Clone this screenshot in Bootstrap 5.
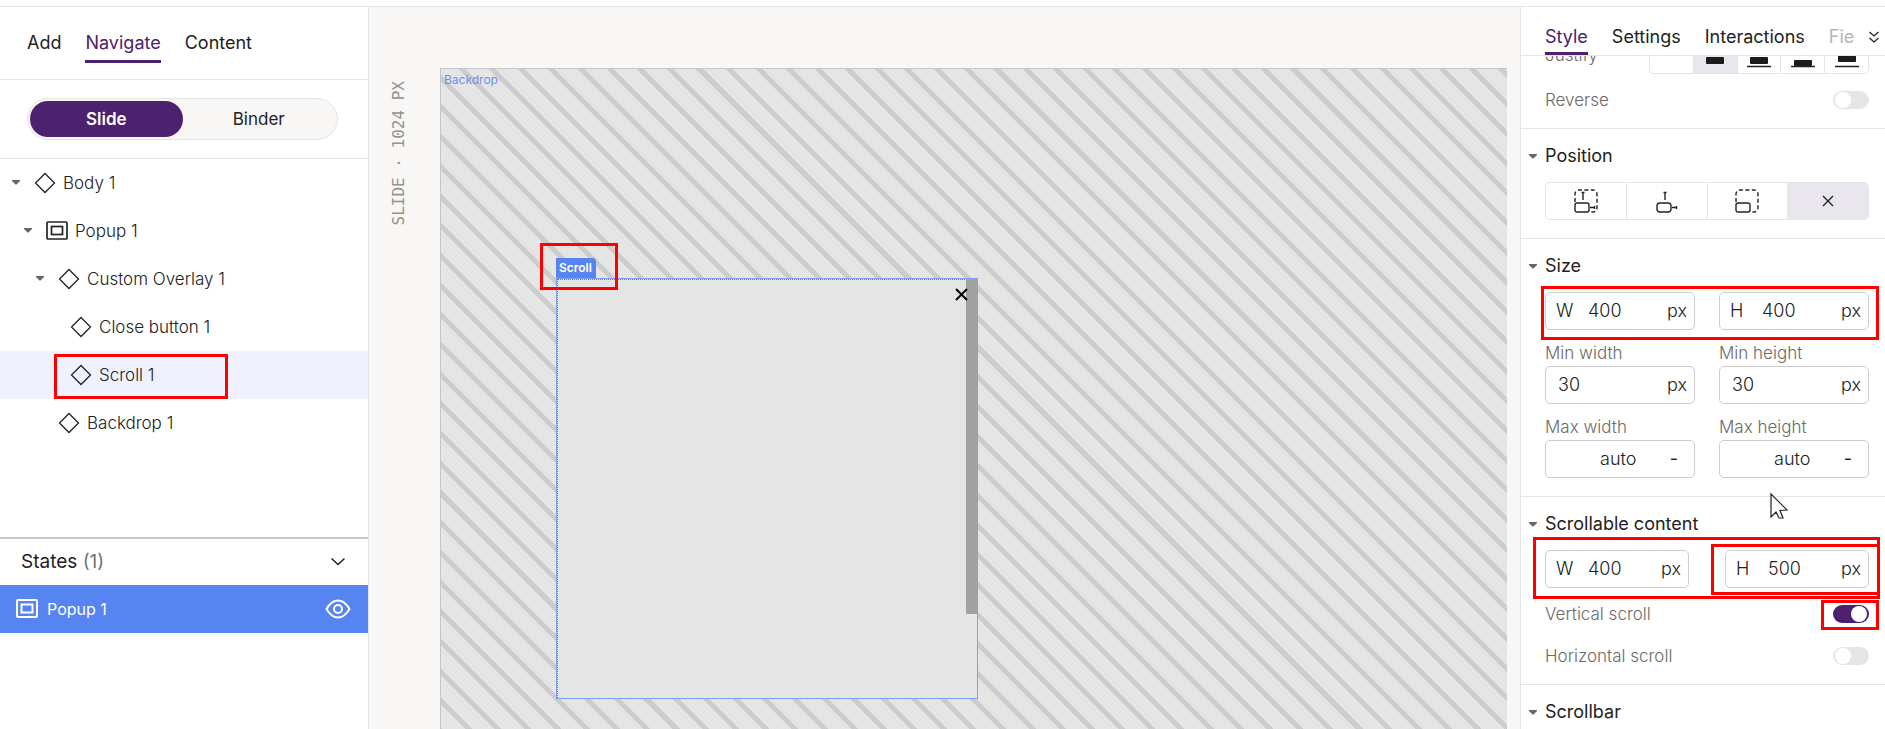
<!DOCTYPE html>
<html lang="en">
<head>
<meta charset="utf-8">
<meta name="viewport" content="width=device-width, initial-scale=1">
<title>Slide editor</title>
<link href="https://cdn.jsdelivr.net/npm/bootstrap@5.3.0/dist/css/bootstrap.min.css" rel="stylesheet">
<script src="https://cdn.jsdelivr.net/npm/bootstrap@5.3.0/dist/js/bootstrap.bundle.min.js"></script>
<style>
  :root { --line: #e5e4e4; --purple: #4c216d; --blue: #5684f0; --ink: #222; --soft: #6c6967; }
  body { font-family: Inter, "Open Sans", sans-serif; font-size: 16px; line-height: 24px; color: var(--ink); background: #fff; }
  svg { display: block; flex: none; fill: none; stroke: currentColor; }
  button { color: inherit; }
  .editor { height: 100vh; padding-top: 6px; overflow: hidden; }
  .editor > * { border-top: 1px solid var(--line); }

  .left-panel { width: 369px; border-right: 1px solid var(--line); }
  .tab-bar { border-bottom: 1px solid var(--line); }
  .left-panel .tab-bar { height: 73px; padding: 0 27px; gap: 24px; }
  .tab-link { color: var(--ink); text-decoration: none; font-size: 18px; line-height: 24px; border-bottom: 3px solid transparent; }
  .tab-link.active { color: var(--purple); border-color: var(--purple); }
  .left-panel .tab-link { padding: 5px 0; margin-top: 3px; }
  .view-switch { padding: 18px 30px 18px 27px; border-bottom: 1px solid var(--line); }
  .view-switch > div { height: 42px; padding: 2px; border: 1px solid var(--line); border-radius: 21px; background: #f8f7f6; }
  .view-switch button { border: 0; background: none; border-radius: 19px; font-size: 17px; }
  .view-switch button.active { background: var(--purple); color: #fff; font-weight: 600; }
  .tree-row { height: 48px; font-size: 17px; font-weight: 300; position: relative; padding-bottom: 1px; }
  .tree-row.selected { background: #eff1fe; }
  .tree-row > button, .twisty-gap { width: 13px; margin-right: 12px; border: 0; padding: 0; background: none; color: #6a6563; display: block; }
  .tree-row > button svg { fill: currentColor; margin: 0 auto; }
  .tree-row > svg { margin-right: 7px; }
  .level-0 { padding-left: 9px; }
  .level-1 { padding-left: 21px; }
  .level-2 { padding-left: 33px; }
  .level-3 { padding-left: 45px; }
  .states { height: 192px; border-top: 2px solid #c9c8c8; }
  .states-head { height: 46px; padding: 0 22px 0 21px; font-size: 19px; }
  .state-row { height: 48px; padding: 0 17px 1px 16px; background: var(--blue); color: #fff; gap: 9px; }
  .state-row svg { stroke-width: 2; }
  .plain-btn { border: 0; background: none; padding: 0; }

  .stage { background: #f8f7f6; padding: 61px 13px 0 20px; gap: 31px; }
  .ruler-label { writing-mode: vertical-rl; transform: rotate(180deg); font: 16px/20px "DejaVu Sans Mono", monospace; color: #949290; align-self: flex-start; margin-top: 13px; }
  .slide { border: 1px solid #c6c6ca; border-width: 1px 0 0 1px; position: relative; overflow: hidden;
    background: repeating-linear-gradient(45deg, #ccc 0 1px, #e5e5e5 1px 17px, #ccc 17px 21px); }
  .slide small { font-size: 12px; line-height: 16px; }
  .slide-tag { color: #6a91ee; padding: 3px; }
  .overlay { position: absolute; left: 115px; top: 209px; width: 422px; height: 421px; background: #e5e5e5; border: 1px solid #7c9ff0; }
  .overlay::before { content: ""; position: absolute; inset: 0; border: 1px dotted #6b7896; border-width: 1px 0 0 1px; }
  .overlay-tag { position: absolute; left: -1px; bottom: 420px; height: 20px; padding: 2px 4px 0 3px; background: var(--blue); color: #fff; font-weight: 600; border-radius: 0 4px 0 0; }
  .overlay-thumb { position: absolute; right: 0; top: 0; width: 11px; height: 335px; background: #a2a2a2; }
  .overlay-close { position: absolute; right: 9px; top: 9px; color: #000; }

  .right-panel { width: 365px; border-left: 1px solid var(--line); }
  .right-panel .tab-bar { height: 49px; padding: 11px 5px 0 24px; gap: 24px; }
  .right-panel .tab-link { padding: 7px 0 3px; }
  .right-panel .tab-link.faded { color: #b5b3b2; }
  .clip-row { height: 18px; overflow: hidden; }
  .clip-row span { padding-bottom: 7px; }
  .field-name { color: var(--soft); font-size: 17px; font-weight: 300; }
  .toggle-row { padding-top: 14px; }
  .toggle-row + .toggle-row { padding-top: 18px; }
  .toggle-row:last-child { padding-bottom: 16px; }
  .group { padding: 0 16px 0 24px; border-bottom: 1px solid var(--line); }
  .group h2 { font-size: 18px; line-height: 24px; font-weight: 400; margin: 0 0 0 -16px; padding: 15px 0 14px; display: flex; align-items: center; gap: 8px; }
  .group h2 svg { fill: #6a6563; stroke: none; }
  .group-end { padding-bottom: 18px; }
  .choice { height: 38px; border: 1px solid #e4e3ea; border-radius: 5px; overflow: hidden; }
  .choice button { border: 0; background: none; padding: 0; display: flex; align-items: center; justify-content: center; flex: 1 1 0; }
  .choice button + button { border-left: 1px solid #e4e3ea; }
  .choice button.active { background: #e9e6ed; }
  .justify { width: 220px; }
  .field { height: 38px; border: 1px solid #ccc; border-radius: 5px; padding: 0 7px 0 9px; font-size: 18px; font-weight: 300; color: var(--ink); display: flex; align-items: center; flex: 1 1 0; min-width: 0; }
  .field input { border: 0; outline: 0; padding: 0; min-width: 0; flex: 1 1 0; width: 0; background: none; color: inherit; font-weight: 300; }
  .field label { width: 33px; padding-left: 1px; }
  .field .unit { width: 20px; text-align: right; }
  .field.bare { padding-left: 12px; }
  .field.auto { padding: 0 16px 0 54px; }
  .pair { gap: 24px; position: relative; }
  .pair.wide { gap: 36px; }
  .captions { padding-top: 11px; padding-bottom: 1px; }
  .captions label { flex: 1 1 0; }
  .switch { appearance: none; width: 36px; height: 18px; border-radius: 9px; background: #e6e5e3; margin: 0; position: relative; }
  .switch::before { content: ""; position: absolute; left: 2px; top: 1px; width: 16px; height: 16px; border-radius: 8px; background: #fff; }
  .switch:checked { background: var(--purple); }
  .switch:checked::before { left: 18px; }

  .callout-box { position: absolute; border: 3px solid #f00; pointer-events: none; }
  .on-tree { left: 54px; top: 3px; width: 174px; height: 45px; }
  .on-tag { left: 99px; top: 174px; width: 78px; height: 47px; }
  .on-size { inset: -6px -10px -10px -4px; }
  .on-content { inset: -13px -11px -11px -12px; }
  .on-height { inset: -7px -12px -8px -15px; }
  .on-switch { inset: -5px -10px -7px -12px; }
  .pointer { position: absolute; right: 96px; top: 485px; }
</style>
</head>
<body>
<svg width="0" height="0" class="position-absolute" aria-hidden="true">
  <symbol id="diamond" viewBox="0 0 22 22"><path d="M11 1.5 20.5 11 11 20.5 1.5 11Z"/></symbol>
  <symbol id="popup" viewBox="0 0 22 20"><rect x="1" y="1" width="20" height="17" rx="1"/><rect x="5.5" y="5.5" width="11" height="8"/></symbol>
  <symbol id="twisty" viewBox="0 0 8 5"><path d="M0 0h8v1L4.500 4.500h-1L0 1z" stroke="none"/></symbol>
</svg>

<div class="editor d-flex">
  <aside class="left-panel d-flex flex-column flex-shrink-0">
    <nav class="tab-bar d-flex align-items-center">
      <a class="tab-link" href="#">Add</a>
      <a class="tab-link active" href="#">Navigate</a>
      <a class="tab-link" href="#">Content</a>
    </nav>
    <div class="view-switch"><div class="d-flex">
      <button type="button" class="active flex-fill w-50">Slide</button>
      <button type="button" class="flex-fill w-50">Binder</button>
    </div></div>

    <div class="flex-grow-1">
      <div class="tree-row level-0 d-flex align-items-center"><button type="button" aria-label="Collapse"><svg width="8" height="5"><use href="#twisty"/></svg></button><svg width="22" height="22" stroke-width="1.300"><use href="#diamond"/></svg>Body 1</div>
      <div class="tree-row level-1 d-flex align-items-center"><button type="button" aria-label="Collapse"><svg width="8" height="5"><use href="#twisty"/></svg></button><svg width="22" height="20" stroke-width="1.700"><use href="#popup"/></svg>Popup 1</div>
      <div class="tree-row level-2 d-flex align-items-center"><button type="button" aria-label="Collapse"><svg width="8" height="5"><use href="#twisty"/></svg></button><svg width="22" height="22" stroke-width="1.300"><use href="#diamond"/></svg>Custom Overlay 1</div>
      <div class="tree-row level-3 d-flex align-items-center"><span class="twisty-gap"></span><svg width="22" height="22" stroke-width="1.300"><use href="#diamond"/></svg>Close button 1</div>
      <div class="tree-row level-3 selected d-flex align-items-center"><span class="twisty-gap"></span><svg width="22" height="22" stroke-width="1.300"><use href="#diamond"/></svg>Scroll 1<span class="callout-box on-tree"></span></div>
      <div class="tree-row level-2 d-flex align-items-center"><span class="twisty-gap"></span><svg width="22" height="22" stroke-width="1.300"><use href="#diamond"/></svg>Backdrop 1</div>
    </div>

    <section class="states">
      <div class="states-head d-flex align-items-center justify-content-between">
        <span>States <span class="text-secondary">(1)</span></span>
        <button type="button" class="plain-btn" aria-label="Collapse states"><svg width="16" height="10" stroke-width="1.500"><path d="m1.500 1.500 6.500 6 6.500-6"/></svg></button>
      </div>
      <div class="state-row d-flex align-items-center">
        <svg width="22" height="20"><use href="#popup"/></svg>
        <span class="flex-grow-1">Popup 1</span>
        <button type="button" class="plain-btn text-white" aria-label="Toggle visibility"><svg width="26" height="20" viewBox="0 0 26 20"><path d="M1.500 10C5 4 9 1.500 13 1.500S21 4 24.500 10C21 16 17 18.500 13 18.500S5 16 1.500 10Z"/><circle cx="13" cy="10" r="4"/></svg></button>
      </div>
    </section>
  </aside>

  <main class="stage d-flex flex-grow-1">
    <div class="ruler-label">SLIDE · 1024 PX</div>
    <div class="slide flex-grow-1">
      <small class="slide-tag d-block">Backdrop</small>
      <div class="overlay">
        <small class="overlay-tag">Scroll</small>
        <div class="overlay-thumb"></div>
        <button type="button" class="plain-btn overlay-close" aria-label="Close"><svg width="13" height="13" stroke-width="2"><path d="m1 1 11 11M12 1 1 12"/></svg></button>
      </div>
      <span class="callout-box on-tag"></span>
    </div>
  </main>

  <aside class="right-panel flex-shrink-0 position-relative">
    <nav class="tab-bar d-flex align-items-start">
      <a class="tab-link active" href="#">Style</a>
      <a class="tab-link" href="#">Settings</a>
      <a class="tab-link" href="#">Interactions</a>
      <div class="d-flex flex-grow-1 justify-content-between">
        <a class="tab-link faded" href="#">Fie</a>
        <button type="button" class="plain-btn" aria-label="More tabs"><svg width="12" height="14" stroke-width="1.300"><path d="m1.500 2 4.500 4 4.500-4M1.500 8 6 12l4.500-4"/></svg></button>
      </div>
    </nav>

    <section class="group">
      <div class="clip-row d-flex align-items-end justify-content-between">
        <span class="field-name">Justify</span>
        <div class="choice justify d-flex flex-shrink-0">
          <button type="button" aria-label="Default"></button>
          <button type="button" class="active" aria-label="Center"><svg width="24" height="26"><rect x="3" y="15" width="18" height="7" rx="1" fill="#1c1c1c" stroke="none"/></svg></button>
          <button type="button" aria-label="Space around"><svg width="24" height="26"><rect x="3" y="15" width="18" height="7" rx="1" fill="#1c1c1c" stroke="none"/><path d="M0 24.500h24" stroke-width="1.500"/></svg></button>
          <button type="button" aria-label="End"><svg width="24" height="26"><rect x="3" y="18" width="18" height="6" rx="1" fill="#1c1c1c" stroke="none"/><path d="M0 24.500h24" stroke-width="1.500"/></svg></button>
          <button type="button" aria-label="Space between"><svg width="24" height="26"><rect x="3" y="13" width="18" height="7" rx="1" fill="#1c1c1c" stroke="none"/><path d="M0 24.500h24" stroke-width="1.500"/></svg></button>
        </div>
      </div>
      <div class="toggle-row d-flex align-items-center justify-content-between field-name">
        <label for="reverse">Reverse</label><input class="switch" type="checkbox" role="switch" id="reverse">
      </div>
    </section>

    <section class="group group-end">
      <h2><svg width="8" height="5"><use href="#twisty"/></svg>Position</h2>
      <div class="choice d-flex">
        <button type="button" aria-label="Fixed"><svg width="24" height="24" stroke-width="1.400"><path d="M1 13V5a4 4 0 0 1 4-4h14a4 4 0 0 1 4 4v14a4 4 0 0 1-4 4h-2" stroke-dasharray="4 2.500"/><rect x="1" y="14" width="14" height="9" rx="2"/><path d="M9 11V4M7.500 3.500h3M16 18.500h4M20.500 17v3"/></svg></button>
        <button type="button" aria-label="Relative"><svg width="24" height="24" stroke-width="1.400"><rect x="2" y="14" width="14" height="9" rx="3"/><path d="M10 11V4M8.500 3.500h3M17 18.500h4M21.500 17v3"/></svg></button>
        <button type="button" aria-label="Absolute"><svg width="24" height="24" stroke-width="1.400"><path d="M1 13V5a4 4 0 0 1 4-4h14a4 4 0 0 1 4 4v14a4 4 0 0 1-4 4h-2" stroke-dasharray="4 2.500"/><rect x="1" y="14" width="14" height="9" rx="2"/></svg></button>
        <button type="button" class="active" aria-label="None"><svg width="12" height="12" stroke-width="1.400"><path d="m1 1 10 10M11 1 1 11"/></svg></button>
      </div>
    </section>

    <section class="group group-end">
      <h2><svg width="8" height="5"><use href="#twisty"/></svg>Size</h2>
      <div class="pair d-flex">
        <div class="field"><label for="w">W</label><input id="w" value="400"><span class="unit">px</span></div>
        <div class="field"><label for="h">H</label><input id="h" value="400"><span class="unit">px</span></div>
        <span class="callout-box on-size"></span>
      </div>
      <div class="pair captions field-name d-flex"><label for="minw">Min width</label><label for="minh">Min height</label></div>
      <div class="pair d-flex">
        <div class="field bare"><input id="minw" value="30"><span class="unit">px</span></div>
        <div class="field bare"><input id="minh" value="30"><span class="unit">px</span></div>
      </div>
      <div class="pair captions field-name d-flex"><label for="maxw">Max width</label><label for="maxh">Max height</label></div>
      <div class="pair d-flex">
        <div class="field auto"><input id="maxw" value="auto"><b>-</b></div>
        <div class="field auto"><input id="maxh" value="auto"><b>-</b></div>
      </div>
    </section>

    <section class="group">
      <h2><svg width="8" height="5"><use href="#twisty"/></svg>Scrollable content</h2>
      <div class="pair wide d-flex">
        <div class="field"><label for="sw">W</label><input id="sw" value="400"><span class="unit">px</span></div>
        <div class="field position-relative"><label for="sh">H</label><input id="sh" value="500"><span class="unit">px</span><span class="callout-box on-height"></span></div>
        <span class="callout-box on-content"></span>
      </div>
      <div class="toggle-row d-flex align-items-center justify-content-between field-name">
        <label for="vs">Vertical scroll</label>
        <span class="position-relative d-flex"><input class="switch" type="checkbox" role="switch" id="vs" checked><span class="callout-box on-switch"></span></span>
      </div>
      <div class="toggle-row d-flex align-items-center justify-content-between field-name">
        <label for="hs">Horizontal scroll</label><input class="switch" type="checkbox" role="switch" id="hs">
      </div>
    </section>

    <section class="group border-0">
      <h2><svg width="8" height="5"><use href="#twisty"/></svg>Scrollbar</h2>
    </section>

    <svg class="pointer" width="20" height="30" viewBox="0 0 20 30" stroke="#112"><path fill="#fff" d="M2 2v23l5-5 3 6h4l-3-7.500 7-.500Z" stroke-width="1.200"/></svg>
  </aside>
</div>
</body>
</html>
